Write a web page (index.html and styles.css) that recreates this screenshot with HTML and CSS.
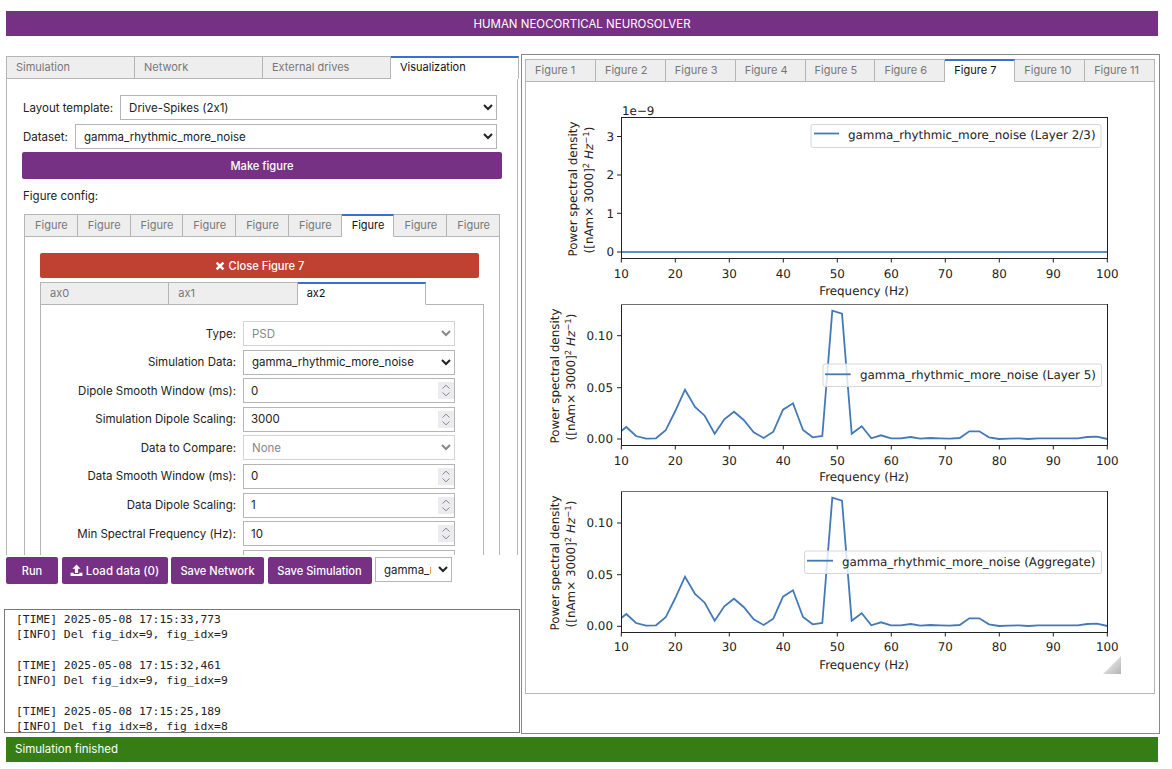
FILE: index.html
```html
<!DOCTYPE html>
<html lang="en">
<head>
<meta charset="utf-8">
<title>Human Neocortical Neurosolver</title>
<link rel="stylesheet" href="styles.css">
</head>
<body>
<header class="app-header">HUMAN NEOCORTICAL NEUROSOLVER</header>
<div class="main">
  <div class="left-col">
    <section class="left-panel">
      <div class="tabs tabs-main">
        <div class="tab">Simulation</div>
        <div class="tab">Network</div>
        <div class="tab">External drives</div>
        <div class="tab active">Visualization</div>
      </div>
      <div class="viz">
        <div class="top-row top-row-first">
          <label class="top-label">Layout template:</label>
          <select class="ctl"><option>Drive-Spikes (2x1)</option></select>
        </div>
        <div class="top-row">
          <label class="top-label">Dataset:</label>
          <select class="ctl"><option>gamma_rhythmic_more_noise</option></select>
        </div>
        <button class="btn btn-make">Make figure</button>
        <div class="config-label">Figure config:</div>
        <div class="fig-config">
          <div class="tabs tabs-fig">
            <div class="tab">Figure</div>
            <div class="tab">Figure</div>
            <div class="tab">Figure</div>
            <div class="tab">Figure</div>
            <div class="tab">Figure</div>
            <div class="tab">Figure</div>
            <div class="tab active">Figure</div>
            <div class="tab">Figure</div>
            <div class="tab">Figure</div>
          </div>
          <div class="fig-body">
            <button class="btn btn-close">
              <svg class="icon-x" viewBox="0 0 10 10" aria-hidden="true"><path d="M1.6 1.6 8.4 8.4M8.4 1.6 1.6 8.4"/></svg>
              Close Figure 7
            </button>
            <div class="tabs tabs-ax">
              <div class="tab">ax0</div>
              <div class="tab">ax1</div>
              <div class="tab active">ax2</div>
            </div>
            <div class="ax-body">
              <label class="f-label">Type:</label>
              <select class="ctl" disabled><option>PSD</option></select>
              <label class="f-label">Simulation Data:</label>
              <select class="ctl"><option>gamma_rhythmic_more_noise</option></select>
              <label class="f-label">Dipole Smooth Window (ms):</label>
              <span class="num-wrap"><input class="ctl num" type="number" value="0"><svg class="spin" viewBox="0 0 16 17" aria-hidden="true"><path d="M4.5 6.5 8 3.2l3.5 3.3M4.5 10.5 8 13.8l3.5-3.3"/></svg></span>
              <label class="f-label">Simulation Dipole Scaling:</label>
              <span class="num-wrap"><input class="ctl num" type="number" value="3000"><svg class="spin" viewBox="0 0 16 17" aria-hidden="true"><path d="M4.5 6.5 8 3.2l3.5 3.3M4.5 10.5 8 13.8l3.5-3.3"/></svg></span>
              <label class="f-label">Data to Compare:</label>
              <select class="ctl" disabled><option>None</option></select>
              <label class="f-label">Data Smooth Window (ms):</label>
              <span class="num-wrap"><input class="ctl num" type="number" value="0"><svg class="spin" viewBox="0 0 16 17" aria-hidden="true"><path d="M4.5 6.5 8 3.2l3.5 3.3M4.5 10.5 8 13.8l3.5-3.3"/></svg></span>
              <label class="f-label">Data Dipole Scaling:</label>
              <span class="num-wrap"><input class="ctl num" type="number" value="1"><svg class="spin" viewBox="0 0 16 17" aria-hidden="true"><path d="M4.5 6.5 8 3.2l3.5 3.3M4.5 10.5 8 13.8l3.5-3.3"/></svg></span>
              <label class="f-label">Min Spectral Frequency (Hz):</label>
              <span class="num-wrap"><input class="ctl num" type="number" value="10"><svg class="spin" viewBox="0 0 16 17" aria-hidden="true"><path d="M4.5 6.5 8 3.2l3.5 3.3M4.5 10.5 8 13.8l3.5-3.3"/></svg></span>
              <span class="f-label"></span>
              <span class="num-wrap"><input class="ctl num" type="number"></span>
            </div>
          </div>
        </div>
      </div>
    </section>
    <div class="actions">
      <button class="btn btn-run">Run</button>
      <button class="btn btn-load">
        <svg class="icon-up" viewBox="0 0 14 14" aria-hidden="true"><path d="M7 .5 11.4 5H8.7v4.6H5.3V5H2.6zM.6 9.4h3.4v1.5h6V9.4h3.4V13H.6z"/></svg>
        Load data (0)
      </button>
      <button class="btn btn-net">Save Network</button>
      <button class="btn btn-sim">Save Simulation</button>
      <select class="ctl ctl-sim"><option>gamma_rhythmic_more_noise</option></select>
    </div>
    <pre class="log">[TIME] 2025-05-08 17:15:33,773
[INFO] Del fig_idx=9, fig_idx=9

[TIME] 2025-05-08 17:15:32,461
[INFO] Del fig_idx=9, fig_idx=9

[TIME] 2025-05-08 17:15:25,189
[INFO] Del fig_idx=8, fig_idx=8</pre>
  </div>
  <section class="right-box">
    <div class="tabs tabs-right">
      <div class="tab">Figure 1</div>
      <div class="tab">Figure 2</div>
      <div class="tab">Figure 3</div>
      <div class="tab">Figure 4</div>
      <div class="tab">Figure 5</div>
      <div class="tab">Figure 6</div>
      <div class="tab active">Figure 7</div>
      <div class="tab">Figure 10</div>
      <div class="tab">Figure 11</div>
    </div>
    <div class="figure-panel">
      <svg class="figure" viewBox="526 82 628 610" width="628" height="610" role="img" aria-label="Power spectral density plots">
        <defs>
          <linearGradient id="grip" x1="0" y1="0" x2="1" y2="1">
            <stop offset="0.25" stop-color="#e8e8e8"/>
            <stop offset="1" stop-color="#b4b4b4"/>
          </linearGradient>
          <polyline id="psd" class="trace" points="621.3,431 626.3,427 636,436 646,438.7 656,438.3 665.7,430.3 675.3,411 685,389.7 695,407 704.7,415.7 714.7,433.7 724.3,419.3 734,411.7 743.7,420 753.7,432.3 763.7,438 773.3,431.7 783,409.7 793,403.3 803,430 812.7,437.3 822.3,436 832.3,310.7 842,313.7 851.7,433.7 861.7,426.3 871.3,438.3 881,435.3 891,438.3 900.7,438.3 910.7,437 920.3,438.7 930.3,438 940,438.3 949.7,438.7 959.7,438 969.3,431.3 979.3,431.3 989,437.3 999,439 1008.7,438.7 1018.7,438.3 1028.3,439 1038,438.3 1048,438.3 1058,438.3 1067.7,438.3 1077.7,438.3 1087.3,437 1097,436.7 1107.3,439"/>
          <path id="xticks" class="tickmark" d="M621.3 0v4M675.3 0v4M729.3 0v4M783.3 0v4M837.3 0v4M891.3 0v4M945.3 0v4M999.3 0v4M1053.3 0v4M1107.3 0v4"/>
        </defs>

        <!-- Plot 1 -->
        <line class="trace trace-flat" x1="621.3" y1="252" x2="1107.3" y2="252"/>
        <rect class="frame" x="621.5" y="117.5" width="486" height="141"/>
        <path class="tickmark" d="M617 252h4M617 213.3h4M617 175h4M617 136.5h4"/>
        <use href="#xticks" y="258.5"/>
        <text class="t" x="622" y="115">1e−9</text>
        <g class="t end">
          <text x="614" y="256">0</text><text x="614" y="217.5">1</text><text x="614" y="179">2</text><text x="614" y="140.5">3</text>
        </g>
        <g class="t mid">
          <text x="621.3" y="278">10</text><text x="675.3" y="278">20</text><text x="729.3" y="278">30</text><text x="783.3" y="278">40</text><text x="837.3" y="278">50</text><text x="891.3" y="278">60</text><text x="945.3" y="278">70</text><text x="999.3" y="278">80</text><text x="1053.3" y="278">90</text><text x="1107.3" y="278">100</text>
          <text x="864" y="295">Frequency (Hz)</text>
          <text transform="translate(577 189) rotate(-90)">Power spectral density</text>
          <text transform="translate(593 190) rotate(-90)">([nAm× 3000]<tspan class="sup" dy="-4">2</tspan><tspan dy="4"> </tspan><tspan class="it">Hz</tspan><tspan class="sup" dy="-4">−1</tspan><tspan dy="4">)</tspan></text>
        </g>
        <rect class="legend" x="811" y="124.5" width="290" height="23" rx="2"/>
        <line class="trace" x1="814" y1="133.5" x2="839" y2="133.5"/>
        <text class="t" x="848" y="139">gamma_rhythmic_more_noise (Layer 2/3)</text>

        <!-- Plot 2 -->
        <use href="#psd"/>
        <rect class="frame" x="621.5" y="304.5" width="486" height="141"/>
        <line class="frame-top" x1="621" y1="304.5" x2="1107" y2="304.5"/>
        <path class="tickmark" d="M617 439h4M617 387.7h4M617 335.7h4"/>
        <use href="#xticks" y="445.5"/>
        <g class="t end">
          <text x="613" y="443">0.00</text><text x="613" y="392">0.05</text><text x="613" y="340">0.10</text>
        </g>
        <g class="t mid">
          <text x="621.3" y="464.5">10</text><text x="675.3" y="464.5">20</text><text x="729.3" y="464.5">30</text><text x="783.3" y="464.5">40</text><text x="837.3" y="464.5">50</text><text x="891.3" y="464.5">60</text><text x="945.3" y="464.5">70</text><text x="999.3" y="464.5">80</text><text x="1053.3" y="464.5">90</text><text x="1107.3" y="464.5">100</text>
          <text x="864" y="481">Frequency (Hz)</text>
          <text transform="translate(559 376) rotate(-90)">Power spectral density</text>
          <text transform="translate(575 377) rotate(-90)">([nAm× 3000]<tspan class="sup" dy="-4">2</tspan><tspan dy="4"> </tspan><tspan class="it">Hz</tspan><tspan class="sup" dy="-4">−1</tspan><tspan dy="4">)</tspan></text>
        </g>
        <rect class="legend" x="823" y="364" width="278.5" height="22.5" rx="2"/>
        <line class="trace" x1="825" y1="374.3" x2="850.7" y2="374.3"/>
        <text class="t" x="860" y="378.5">gamma_rhythmic_more_noise (Layer 5)</text>

        <!-- Plot 3 -->
        <use href="#psd" y="187"/>
        <rect class="frame" x="621.5" y="491.5" width="486" height="141"/>
        <line class="frame-top" x1="621" y1="491.5" x2="1107" y2="491.5"/>
        <path class="tickmark" d="M617 626.3h4M617 574.7h4M617 523h4"/>
        <use href="#xticks" y="632.5"/>
        <g class="t end">
          <text x="613" y="630">0.00</text><text x="613" y="579">0.05</text><text x="613" y="527">0.10</text>
        </g>
        <g class="t mid">
          <text x="621.3" y="651">10</text><text x="675.3" y="651">20</text><text x="729.3" y="651">30</text><text x="783.3" y="651">40</text><text x="837.3" y="651">50</text><text x="891.3" y="651">60</text><text x="945.3" y="651">70</text><text x="999.3" y="651">80</text><text x="1053.3" y="651">90</text><text x="1107.3" y="651">100</text>
          <text x="864" y="669">Frequency (Hz)</text>
          <text transform="translate(559 563) rotate(-90)">Power spectral density</text>
          <text transform="translate(575 564) rotate(-90)">([nAm× 3000]<tspan class="sup" dy="-4">2</tspan><tspan dy="4"> </tspan><tspan class="it">Hz</tspan><tspan class="sup" dy="-4">−1</tspan><tspan dy="4">)</tspan></text>
        </g>
        <rect class="legend" x="804.5" y="551" width="297" height="22.5" rx="2"/>
        <line class="trace" x1="807" y1="560.7" x2="833" y2="560.7"/>
        <text class="t" x="842" y="565.5">gamma_rhythmic_more_noise (Aggregate)</text>

        <polygon points="1121,656 1121,674 1103,674" fill="url(#grip)"/>
      </svg>
    </div>
  </section>
</div>
<footer class="status">Simulation finished</footer>
</body>
</html>
```
FILE: styles.css
```css
* { box-sizing: border-box; }
html, body { margin: 0; padding: 0; background: #fff; }
body {
  width: 1172px;
  height: 769px;
  overflow: hidden;
  font-family: Inter, "Liberation Sans", Arial, sans-serif;
  font-size: 11.5px;
  font-feature-settings: "calt" 0;
  color: #333;
}

.app-header {
  margin: 11px 14px 0 6px;
  height: 25px;
  background: #763084;
  color: #fff;
  display: flex;
  align-items: center;
  justify-content: center;
}

.main { display: flex; margin-top: 18px; }
.left-col { width: 521px; padding-top: 2px; flex: none; }

.left-panel {
  width: 513px;
  height: 499px;
  margin-left: 6px;
  overflow: hidden;
}

/* Tabs */
.tabs { display: flex; height: 23px; font-size: 11px; }
.tab {
  flex: 1 1 0;
  min-width: 0;
  background: #eee;
  color: #777;
  border: 1px solid #b5b5b5;
  border-left-width: 0;
  padding: 0 0 1px 9px;
  display: flex;
  align-items: center;
  white-space: nowrap;
}
.tab:first-child { border-left-width: 1px; }
.tab.active {
  background: #fff;
  color: #111;
  border-top: 2px solid #3b6fd0;
  border-bottom-color: transparent;
  padding-bottom: 2px;
}

.viz {
  height: 476px;
  border-left: 1px solid #b5b5b5;
  border-right: 1px solid #b5b5b5;
  margin-right: 1px;
  padding: 16px 15px 0;
}
.top-row { display: flex; align-items: center; gap: 7px; padding: 0 5px 0 1px; margin-top: 4px; height: 25px; }
.top-row-first { margin-top: 0; }
.top-label { flex: none; color: #222; }

.ctl {
  width: 100%;
  min-width: 0;
  height: 25px;
  border: 1px solid #b5b5b5;
  border-radius: 0;
  background-color: #fff;
  color: #222;
  font: inherit;
  padding: 0 4px;
  margin: 0;
}
.ctl:disabled { border-color: #d4d4d4; color: #888; opacity: 1; }

.num-wrap { position: relative; display: block; height: 25px; }
.num { display: block; padding: 0 7px; appearance: textfield; }
.num::-webkit-inner-spin-button { appearance: none; margin: 0; }
.spin {
  position: absolute;
  right: 1px;
  top: 4px;
  width: 16px;
  height: 17px;
  background: #ececf0;
  fill: none;
  stroke: #8a8a8a;
  stroke-width: 1;
}

.btn {
  border: 0;
  border-radius: 2px;
  background: #763084;
  color: #fff;
  font: inherit;
  font-size: 11.1px;
  font-weight: 500;
  padding: 0;
  display: flex;
  align-items: center;
  justify-content: center;
  height: 27px;
}
.btn-make { width: 480px; margin-top: 3px; }

.config-label { height: 34px; padding-bottom: 1px; margin-bottom: 1px; display: flex; align-items: center; padding-left: 1px; color: #222; }

.fig-config { width: 476px; margin-left: 2px; }
.fig-body {
  height: 400px;
  border-left: 1px solid #b5b5b5;
  border-right: 1px solid #b5b5b5;
  padding: 16px 15px 0;
}
.tabs-fig .tab { padding-left: 10px; }

.btn-close { width: 439px; height: 25px; background: #c04032; gap: 4px; }
.icon-x { width: 10px; height: 10px; fill: none; stroke: #fff; stroke-width: 2.4; }

.tabs-ax { width: 386px; margin-top: 4px; }
.tabs-ax .tab { border-bottom-color: #b5b5b5; }
.tabs-ax .tab.active { border-bottom-color: transparent; }

.ax-body {
  width: 444px;
  border: 1px solid #b5b5b5;
  margin-top: -1px;
  padding: 16px 0;
  display: grid;
  grid-template-columns: 195px 212px;
  column-gap: 7px;
  row-gap: 3.6px;
  align-items: center;
}
.f-label { text-align: right; color: #222; white-space: nowrap; }

/* Bottom actions */
.actions { display: flex; margin: 2px 0 0 6px; gap: 3.5px; height: 27px; }
.btn-run { width: 52px; }
.btn-load { width: 106px; gap: 3px; font-size: 11.5px; }
.btn-net { width: 93px; }
.btn-sim { width: 104px; }
.ctl-sim { width: 77px; height: 25px; }
.icon-up { width: 13px; height: 13px; fill: #fff; }

.log {
  width: 516px;
  height: 124px;
  margin: 25px 0 0 4px;
  padding: 2px 11px 0;
  border: 1px solid #777;
  overflow: hidden;
  font-family: "DejaVu Sans Mono", monospace;
  font-size: 11.35px;
  line-height: 15.35px;
  color: #222;
}

/* Right side */
.right-box {
  width: 639px;
  height: 680px;
  border: 1px solid #888;
  padding: 4px 0 0 3px;
}
.tabs-right { width: 630px; }
.figure-panel {
  width: 630px;
  height: 612px;
  border: 1px solid #b5b5b5;
  border-top: 0;
}
.figure { display: block; }

.t {
  font-family: "DejaVu Sans", sans-serif;
  font-size: 11.9px;
  fill: #222;
  text-rendering: geometricPrecision;
}
.end { text-anchor: end; }
.mid { text-anchor: middle; }
.sup { font-size: 8.5px; }
.it { font-style: italic; }
.trace { fill: none; stroke: #4479b8; stroke-width: 1.8; }
.trace-flat { stroke: #5e8ec6; stroke-width: 2; }
.frame { fill: none; stroke: #222; stroke-width: 1; }
.frame-top { stroke: #707070; stroke-width: 1; }
.tickmark { fill: none; stroke: #222; stroke-width: 1; }
.legend { fill: #fff; fill-opacity: 0.8; stroke: #d6d6d6; stroke-width: 1; }

.status {
  margin: 3px 14px 0 6px;
  height: 25px;
  background: #377d15;
  color: #fff;
  display: flex;
  align-items: center;
  padding: 0 0 1px 9px;
}
```
